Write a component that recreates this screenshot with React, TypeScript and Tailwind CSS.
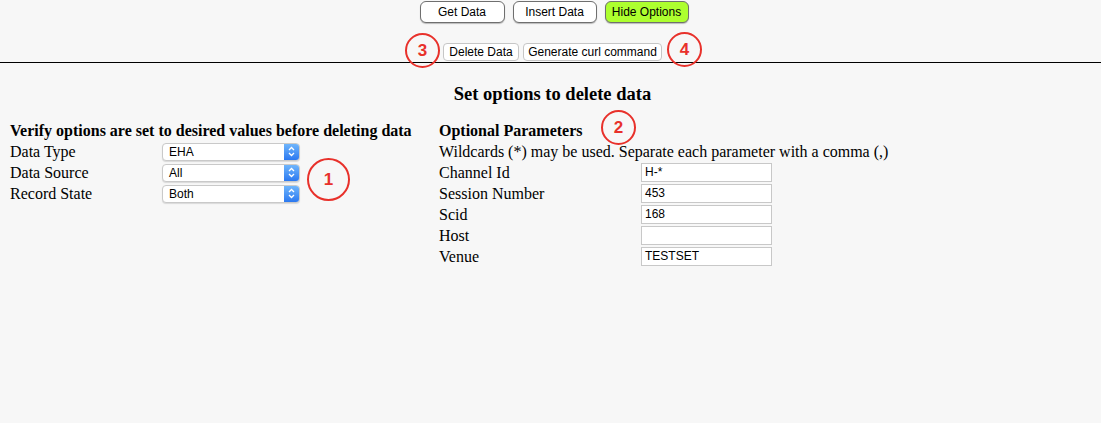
import React from 'react';

const serif = { fontFamily: '"Liberation Serif", "Times New Roman", serif' };
const sans = { fontFamily: '"Liberation Sans", Arial, sans-serif' };

const Marker: React.FC<{ n: string; className: string }> = ({ n, className }) => (
  <div
    className={`absolute flex items-center justify-center rounded-full border-2 border-[#e8312b] text-[#e8312b] font-bold text-[17px] ${className}`}
    style={sans}
  >
    {n}
  </div>
);

const FakeSelect: React.FC<{ value: string }> = ({ value }) => (
  <div
    className="flex h-[18px] w-[138px] items-stretch rounded-[4px] border border-[#c9c9c9] bg-white shadow-[0_1px_1px_rgba(0,0,0,0.12)] overflow-hidden"
    style={sans}
  >
    <span className="flex-1 pl-[6px] text-[12px] leading-[16px] text-black">{value}</span>
    <span className="flex w-[15px] items-center justify-center bg-gradient-to-b from-[#6fb5fb] to-[#2b78f0]">
      <svg width="7" height="11" viewBox="0 0 7 11" fill="none" stroke="white" strokeWidth="1.3">
        <path d="M1 4 L3.5 1.5 L6 4" />
        <path d="M1 7 L3.5 9.5 L6 7" />
      </svg>
    </span>
  </div>
);

const TextField: React.FC<{ value: string }> = ({ value }) => (
  <div
    className="h-[19px] w-[131px] border border-[#c8c8c8] bg-white pl-[3px] text-[12px] leading-[17px] text-black"
    style={sans}
  >
    {value}
  </div>
);

export default function App() {
  const optionRows = [
    { label: 'Data Type', value: 'EHA' },
    { label: 'Data Source', value: 'All' },
    { label: 'Record State', value: 'Both' },
  ];
  const params = [
    { label: 'Channel Id', value: 'H-*' },
    { label: 'Session Number', value: '453' },
    { label: 'Scid', value: '168' },
    { label: 'Host', value: '' },
    { label: 'Venue', value: 'TESTSET' },
  ];

  return (
    <div className="relative min-h-[423px] w-full bg-[#f7f7f7] text-black">
      {/* top buttons */}
      <div className="flex justify-center gap-[8px] pt-[1px] pl-[7px]" style={sans}>
        <button className="h-[22px] w-[85px] rounded-[6px] border border-[#6f6f6f] bg-white text-[12px] shadow-[0_1px_1px_rgba(0,0,0,0.25)]">
          Get Data
        </button>
        <button className="h-[22px] w-[84px] rounded-[6px] border border-[#6f6f6f] bg-white text-[12px] shadow-[0_1px_1px_rgba(0,0,0,0.25)]">
          Insert Data
        </button>
        <button className="h-[22px] w-[84px] rounded-[6px] border border-[#6f6f6f] bg-[#adff2f] text-[12px] shadow-[0_1px_1px_rgba(0,0,0,0.25)]">
          Hide Options
        </button>
      </div>
      <div className="flex justify-center gap-[4px] pt-[20px] pl-[4px]" style={sans}>
        <button className="h-[18px] w-[76px] rounded-[4px] border border-[#c6c6c6] bg-white text-[12px] leading-[16px]">
          Delete Data
        </button>
        <button className="h-[18px] w-[139px] rounded-[4px] border border-[#c6c6c6] bg-white text-[12px] leading-[16px]">
          Generate curl command
        </button>
      </div>
      <div className="mt-[1px] border-t border-black" />

      <h1 className="pt-[20px] pl-[4px] text-center text-[18.5px] font-bold leading-[22px]" style={serif}>
        Set options to delete data
      </h1>

      <div className="flex pt-[15px] text-[16px] leading-[21px]" style={serif}>
        <div className="w-[439px] shrink-0 pl-[10px]">
          <div className="font-bold">Verify options are set to desired values before deleting data</div>
          {optionRows.map((r) => (
            <div key={r.label} className="flex h-[21px] items-center">
              <span className="w-[152px]">{r.label}</span>
              <FakeSelect value={r.value} />
            </div>
          ))}
        </div>
        <div className="flex-1">
          <div className="font-bold">Optional Parameters</div>
          <div>Wildcards (*) may be used. Separate each parameter with a comma (,)</div>
          {params.map((p) => (
            <div key={p.label} className="flex h-[21px] items-center">
              <span className="w-[202px]">{p.label}</span>
              <TextField value={p.value} />
            </div>
          ))}
        </div>
      </div>

      <Marker n="3" className="left-[405px] top-[33px] h-[35px] w-[35px]" />
      <Marker n="4" className="left-[667px] top-[32px] h-[35px] w-[35px]" />
      <Marker n="1" className="left-[307px] top-[158px] h-[43px] w-[43px]" />
      <Marker n="2" className="left-[601px] top-[110px] h-[35px] w-[35px]" />
    </div>
  );
}
